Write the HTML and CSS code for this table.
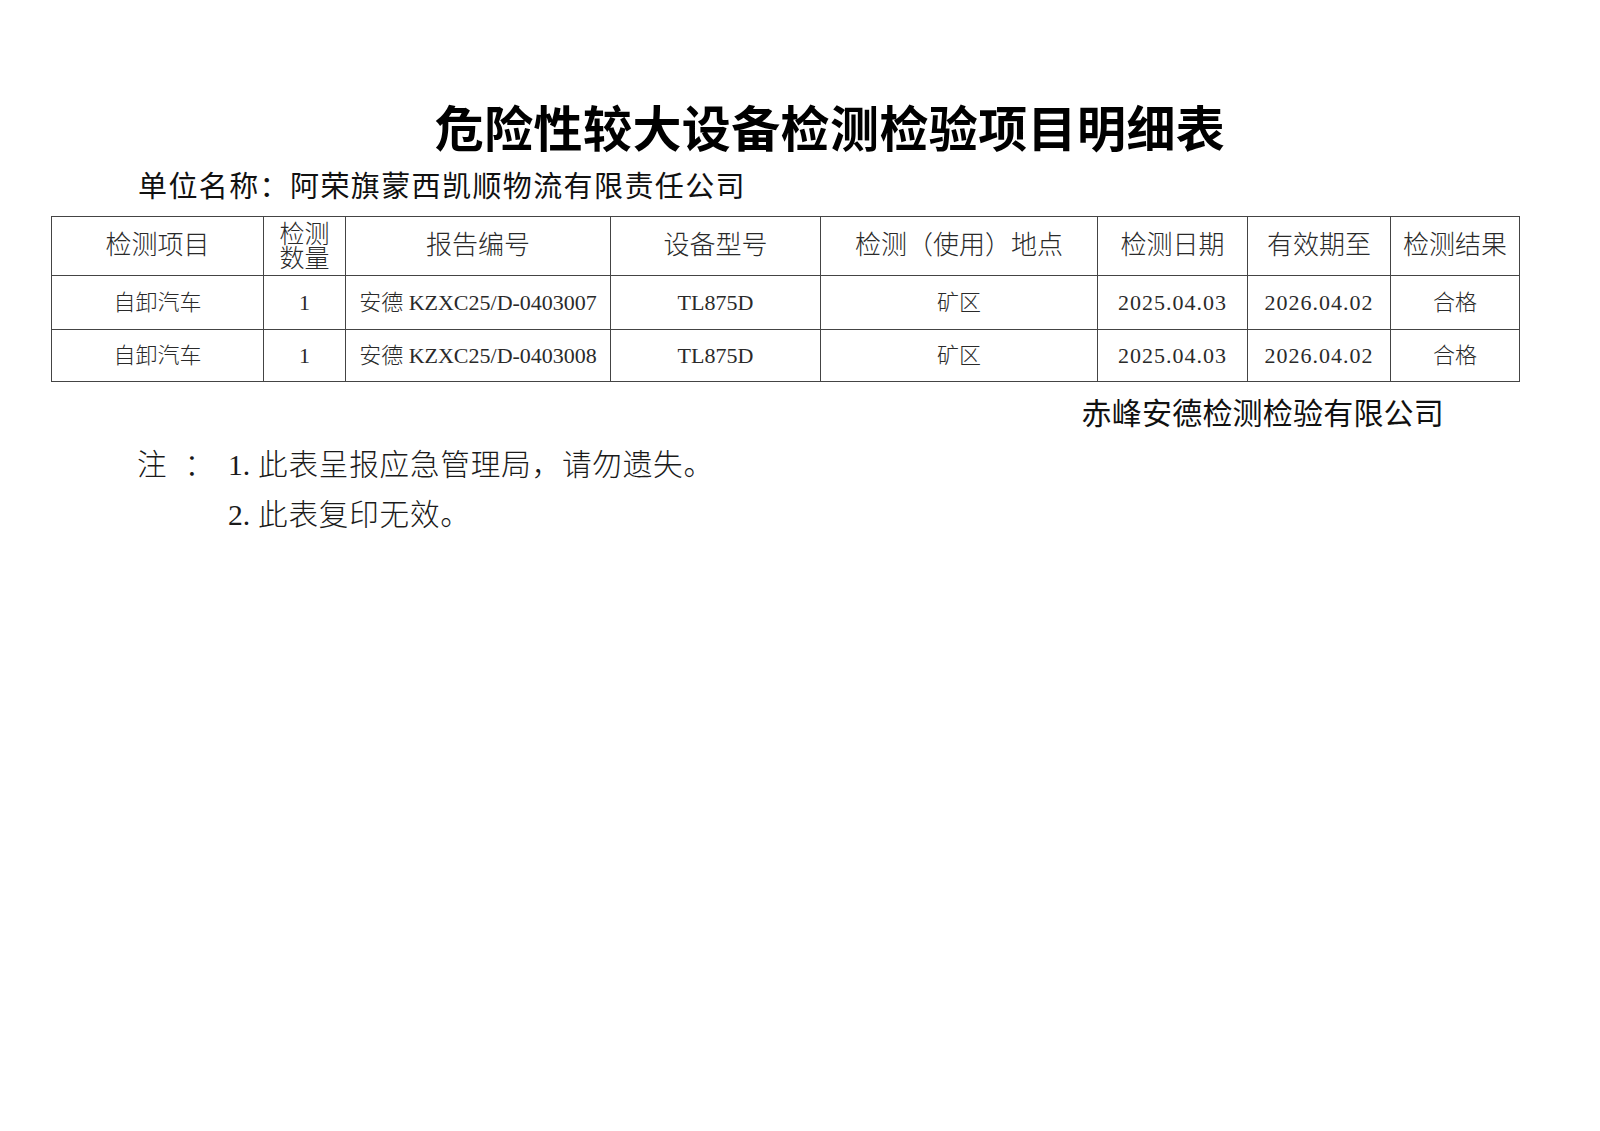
FILE: index.html
```html
<!DOCTYPE html>
<html lang="zh-CN">
<head>
<meta charset="utf-8">
<title>危险性较大设备检测检验项目明细表</title>
<link rel="stylesheet" href="styles.css">
</head>
<body>
<div class="page">
  <h1 class="title">危险性较大设备检测检验项目明细表</h1>
  <div class="unit">单位名称：阿荣旗蒙西凯顺物流有限责任公司</div>
  <table class="grid">
    <colgroup>
      <col class="c1"><col class="c2"><col class="c3"><col class="c4">
      <col class="c5"><col class="c6"><col class="c7"><col class="c8">
    </colgroup>
    <thead>
      <tr>
        <th>检测项目</th>
        <th class="stack">检测<br>数量</th>
        <th>报告编号</th>
        <th>设备型号</th>
        <th>检测（使用）地点</th>
        <th>检测日期</th>
        <th>有效期至</th>
        <th>检测结果</th>
      </tr>
    </thead>
    <tbody>
      <tr class="r1">
        <td>自卸汽车</td>
        <td>1</td>
        <td>安德 KZXC25/D-0403007</td>
        <td>TL875D</td>
        <td>矿区</td>
        <td class="date">2025.04.03</td>
        <td class="date">2026.04.02</td>
        <td>合格</td>
      </tr>
      <tr class="r2">
        <td>自卸汽车</td>
        <td>1</td>
        <td>安德 KZXC25/D-0403008</td>
        <td>TL875D</td>
        <td>矿区</td>
        <td class="date">2025.04.03</td>
        <td class="date">2026.04.02</td>
        <td>合格</td>
      </tr>
    </tbody>
  </table>
  <div class="company-row">
    <div class="company">赤峰安德检测检验有限公司</div>
  </div>
  <div class="notes">
    <div class="note-label">注<span class="sp"> </span>：</div>
    <div class="note-lines">
      <div class="note"><span class="num">1.</span>此表呈报应急管理局，请勿遗失。</div>
      <div class="note"><span class="num">2.</span>此表复印无效。</div>
    </div>
  </div>
</div>
</body>
</html>
```

FILE: styles.css
```css
html, body {
  margin: 0;
  padding: 0;
  background: #ffffff;
  text-spacing-trim: space-all;
}

.page {
  width: 1600px;
  min-height: 1131px;
  box-sizing: border-box;
  padding-top: 96px;
  color: #111;
}

.title {
  margin: 0;
  padding-left: 60px;
  text-align: center;
  font-family: "Noto Sans CJK SC", sans-serif;
  font-weight: 700;
  font-size: 49px;
  letter-spacing: 0.4px;
  line-height: 60px;
  color: #000;
}

.unit {
  margin-top: 8px;
  padding-left: 138px;
  font-family: "Noto Sans CJK SC", sans-serif;
  font-size: 29px;
  letter-spacing: 1.4px;
  line-height: 40px;
  color: #111;
}

.grid {
  margin-top: 12px;
  margin-left: 51px;
  width: 1468px;
  border-collapse: collapse;
  table-layout: fixed;
  font-family: "Liberation Serif", "Noto Sans CJK SC", serif;
  color: #2a2a2a;
}

.c1 { width: 212px; }
.c2 { width: 82px; }
.c3 { width: 265px; }
.c4 { width: 210px; }
.c5 { width: 277px; }
.c6 { width: 150px; }
.c7 { width: 143px; }
.c8 { width: 129px; }

.grid th,
.grid td {
  border: 1px solid #444;
  padding: 0;
  text-align: center;
  vertical-align: middle;
  white-space: nowrap;
}

.grid th {
  height: 56px;
  font-weight: 300;
  font-size: 26px;
  line-height: 30px;
}

.grid th.stack {
  font-size: 25px;
  line-height: 24px;
  padding-top: 2px;
}

.grid td {
  font-weight: 300;
  font-size: 22px;
  line-height: 26px;
}

.grid .r1 td { height: 53px; }
.grid .r2 td { height: 51px; }

.grid td.date {
  letter-spacing: 1px;
}

.company-row {
  margin-top: 9px;
  display: flex;
  justify-content: flex-end;
  padding-right: 156px;
}

.company {
  font-family: "Noto Sans CJK SC", sans-serif;
  font-size: 30px;
  letter-spacing: 0.2px;
  line-height: 40px;
  color: #111;
}

.notes {
  margin-top: 9px;
  padding-left: 137px;
  display: flex;
  font-family: "Liberation Serif", "Noto Sans CJK SC", serif;
  font-weight: 300;
  font-size: 29.6px;
  line-height: 50px;
  color: #1a1a1a;
}

.note-label {
  width: 91px;
  flex: none;
}

.note-label .sp {
  display: inline-block;
  width: 18px;
}

.note {
  letter-spacing: 0.8px;
}

.num {
  display: inline-block;
  width: 30px;
  letter-spacing: 0;
}
```
